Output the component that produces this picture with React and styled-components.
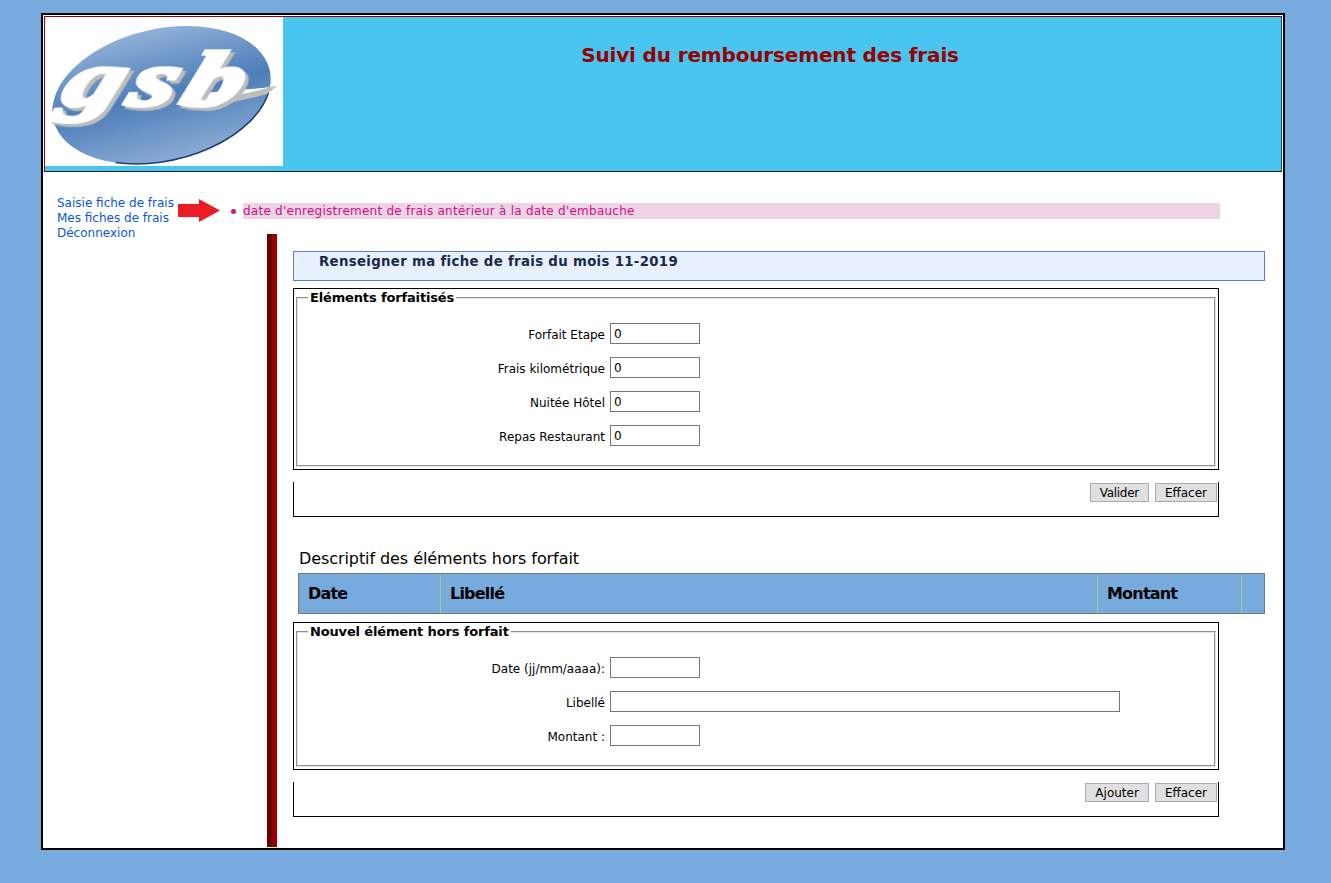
import React from 'react'
import styled, { createGlobalStyle } from 'styled-components'

const Global = createGlobalStyle`
  html, body { margin: 0; padding: 0; }
  body {
    background: #77aadd;
    font-family: "DejaVu Sans", "Liberation Sans", sans-serif;
    font-size: 12px;
    color: #000;
  }
`

const Page = styled.div`
  box-sizing: border-box;
  width: 1244px;
  height: 837px;
  margin: 13px 0 0 41px;
  background: #fff;
  border: 2px solid #000;
  padding: 1px 1px 0 1px;
`

const Header = styled.header`
  display: flex;
  height: 156px;
  box-sizing: border-box;
  background: #48c6f0;
  border: 1px solid #900;
  border-right-color: #0b4a5e;
  border-bottom-color: #222;
`

const LogoBox = styled.div`
  width: 238px;
  height: 149px;
  background: #fff;
  flex: none;
`

const Title = styled.h1`
  flex: 1;
  margin: 26px 0 0;
  padding-right: 24px;
  text-align: center;
  font-size: 20px;
  font-weight: bold;
  letter-spacing: -0.15px;
  line-height: 24px;
  color: #900;
`

const TopRow = styled.div`
  display: flex;
  height: 62px;
`

const Menu = styled.nav`
  width: 121px;
  padding: 24px 0 0 13px;
  flex: none;
`

const MenuLink = styled.a`
  display: block;
  line-height: 15px;
  font-size: 12px;
  color: #0b55d8;
  white-space: nowrap;
`

const Arrow = styled.svg`
  flex: none;
  margin-top: 27px;
`

const ErrorList = styled.ul`
  margin: 31px 0 0;
  padding: 0 0 0 23px;
  width: 977px;
  color: #d0107f;
  list-style: none;
  li {
    position: relative;
    background: #edd3e6;
    height: 16px;
    line-height: 16px;
    font-size: 12px;
    letter-spacing: 0.25px;
  }
  li::before {
    content: '';
    position: absolute;
    left: -12px;
    top: 6px;
    width: 5px;
    height: 5px;
    border-radius: 50%;
    background: #c8187f;
  }
`

const Content = styled.main`
  box-sizing: border-box;
  margin-left: 223px;
  height: 613px;
  background: linear-gradient(90deg, #6b0000 5px, #990000 5px, #990000 10px, transparent 10px);
  padding: 17px 17px 0 26px;
`

const PageTitle = styled.h2`
  box-sizing: border-box;
  height: 30px;
  margin: 0 0 7px;
  padding: 1px 0 0 25px;
  background: #e8f0fd;
  border: 1px solid #5f7fbf;
  font-size: 13.3px;
  letter-spacing: 0.33px;
  line-height: 17px;
  color: #1b2a4a;
`

const FormBox = styled.div`
  box-sizing: border-box;
  width: 926px;
  border: 1px solid #000;
  padding: 0 2px 2px;
`

const Group = styled.fieldset`
  margin: 0;
  padding: 10px 0 0;
  height: ${p => p.$height}px;
  box-sizing: border-box;
  border: 2px groove #e4e4e4;
`

const Legend = styled.legend`
  margin-left: 10px;
  padding: 1px 2px 0;
  font-size: 13px;
  font-weight: bold;
  letter-spacing: -0.15px;
  line-height: 16px;
`

const Row = styled.div`
  display: flex;
  align-items: center;
  height: 34px;
`

const Label = styled.label`
  width: 307px;
  margin-right: 5px;
  padding-top: 4px;
  text-align: right;
  white-space: nowrap;
`

const Input = styled.input`
  box-sizing: border-box;
  width: ${p => p.$width}px;
  height: 21px;
  padding: 1px 3px 0;
  border: 1px solid #777;
  background: #fff;
  font: 12px "DejaVu Sans", sans-serif;
  color: #000;
`

const Actions = styled.div`
  box-sizing: border-box;
  display: flex;
  justify-content: flex-end;
  gap: 6px;
  width: 926px;
  height: 35px;
  margin-top: 12px;
  padding: 1px 1px 0 0;
  border: 1px solid #000;
  border-top: 0;
`

const Button = styled.button`
  box-sizing: border-box;
  height: 19px;
  padding: 0 9px;
  background: #e0e0e0;
  border: 1px solid #aaa;
  font: 12px "DejaVu Sans", sans-serif;
  letter-spacing: ${p => (p.$tight ? '-0.3px' : '0')};
  color: #000;
`

const SectionTitle = styled.h3`
  margin: 29px 0 2px 6px;
  font-size: 16px;
  font-weight: normal;
  letter-spacing: -0.08px;
  line-height: 25px;
`

const Table = styled.table`
  box-sizing: border-box;
  width: 967px;
  height: 41px;
  margin: 0 0 8px 5px;
  border-collapse: separate;
  border-spacing: 0;
  background: #77aadd;
  border: 1px solid #777;
`

const Th = styled.th`
  box-sizing: border-box;
  width: ${p => p.$width}px;
  padding: 0 0 0 9px;
  text-align: left;
  font-size: 16px;
  font-weight: bold;
  letter-spacing: -0.8px;
  border-left: 1px dotted #d6dc50;
  &:first-child { border-left: 0; }
`

const Logo = () => (
  <svg width="238" height="149" viewBox="0 0 238 149">
    <defs>
      <linearGradient id="oval" x1="0" y1="0" x2="0" y2="1">
        <stop offset="0" stopColor="#8fb0d8" />
        <stop offset="0.5" stopColor="#4d7db9" />
        <stop offset="1" stopColor="#8aabd4" />
      </linearGradient>
    </defs>
    <g transform="translate(116.500 78) rotate(-13)">
      <ellipse rx="111" ry="66" fill="url(#oval)" />
      <path d="M-60 55.500A111 66 0 0 0 105 21.400" fill="none" stroke="#1d3f70" strokeWidth="1.5" />
    </g>
    <path d="M 158 78 Q 195 75 232 69 L 222 77 Q 190 86 158 90 Z" fill="#bdbdbd" />
    <path d="M 155 76 Q 190 74 226 70 Q 190 80 155 86 Z" fill="#fff" />
    <text
      transform="matrix(1.5 0 -0.35 1 14 88)"
      fontFamily="Liberation Serif, serif"
      fontStyle="italic"
      fontWeight="bold"
      fontSize="78"
      letterSpacing="5"
      fill="#fff"
      stroke="#fff"
      strokeWidth="4"
      style={{ filter: 'drop-shadow(3px 3px 0 #bdbdbd)' }}
    >
      gsb
    </text>
  </svg>
)

const RedArrow = () => (
  <Arrow width="42" height="23" viewBox="0 0 42 23">
    <path d="M0 5h21V0l21 11.500L21 23v-5H0z" fill="#ed1c24" />
  </Arrow>
)

const forfait = ['Forfait Etape', 'Frais kilométrique', 'Nuitée Hôtel', 'Repas Restaurant']

export default function App() {
  return (
    <>
      <Global />
      <Page>
        <Header>
          <LogoBox><Logo /></LogoBox>
          <Title>Suivi du remboursement des frais</Title>
        </Header>
        <TopRow>
          <Menu>
            <MenuLink>Saisie fiche de frais</MenuLink>
            <MenuLink>Mes fiches de frais</MenuLink>
            <MenuLink>Déconnexion</MenuLink>
          </Menu>
          <RedArrow />
          <ErrorList>
            <li>date d'enregistrement de frais antérieur à la date d'embauche</li>
          </ErrorList>
        </TopRow>
        <Content>
          <PageTitle>Renseigner ma fiche de frais du mois 11-2019</PageTitle>
          <FormBox>
            <Group $height={178}>
              <Legend>Eléments forfaitisés</Legend>
              {forfait.map(label => (
                <Row key={label}>
                  <Label>{label}</Label>
                  <Input $width={90} defaultValue="0" />
                </Row>
              ))}
            </Group>
          </FormBox>
          <Actions>
            <Button $tight>Valider</Button>
            <Button>Effacer</Button>
          </Actions>
          <SectionTitle>Descriptif des éléments hors forfait</SectionTitle>
          <Table>
            <thead>
              <tr>
                <Th $width={141}>Date</Th>
                <Th $width={657}>Libellé</Th>
                <Th $width={144}>Montant</Th>
                <Th />
              </tr>
            </thead>
          </Table>
          <FormBox>
            <Group $height={144}>
              <Legend>Nouvel élément hors forfait</Legend>
              <Row>
                <Label>Date (jj/mm/aaaa):</Label>
                <Input $width={90} />
              </Row>
              <Row>
                <Label>Libellé</Label>
                <Input $width={510} />
              </Row>
              <Row>
                <Label>Montant :</Label>
                <Input $width={90} />
              </Row>
            </Group>
          </FormBox>
          <Actions>
            <Button>Ajouter</Button>
            <Button>Effacer</Button>
          </Actions>
        </Content>
      </Page>
    </>
  )
}
